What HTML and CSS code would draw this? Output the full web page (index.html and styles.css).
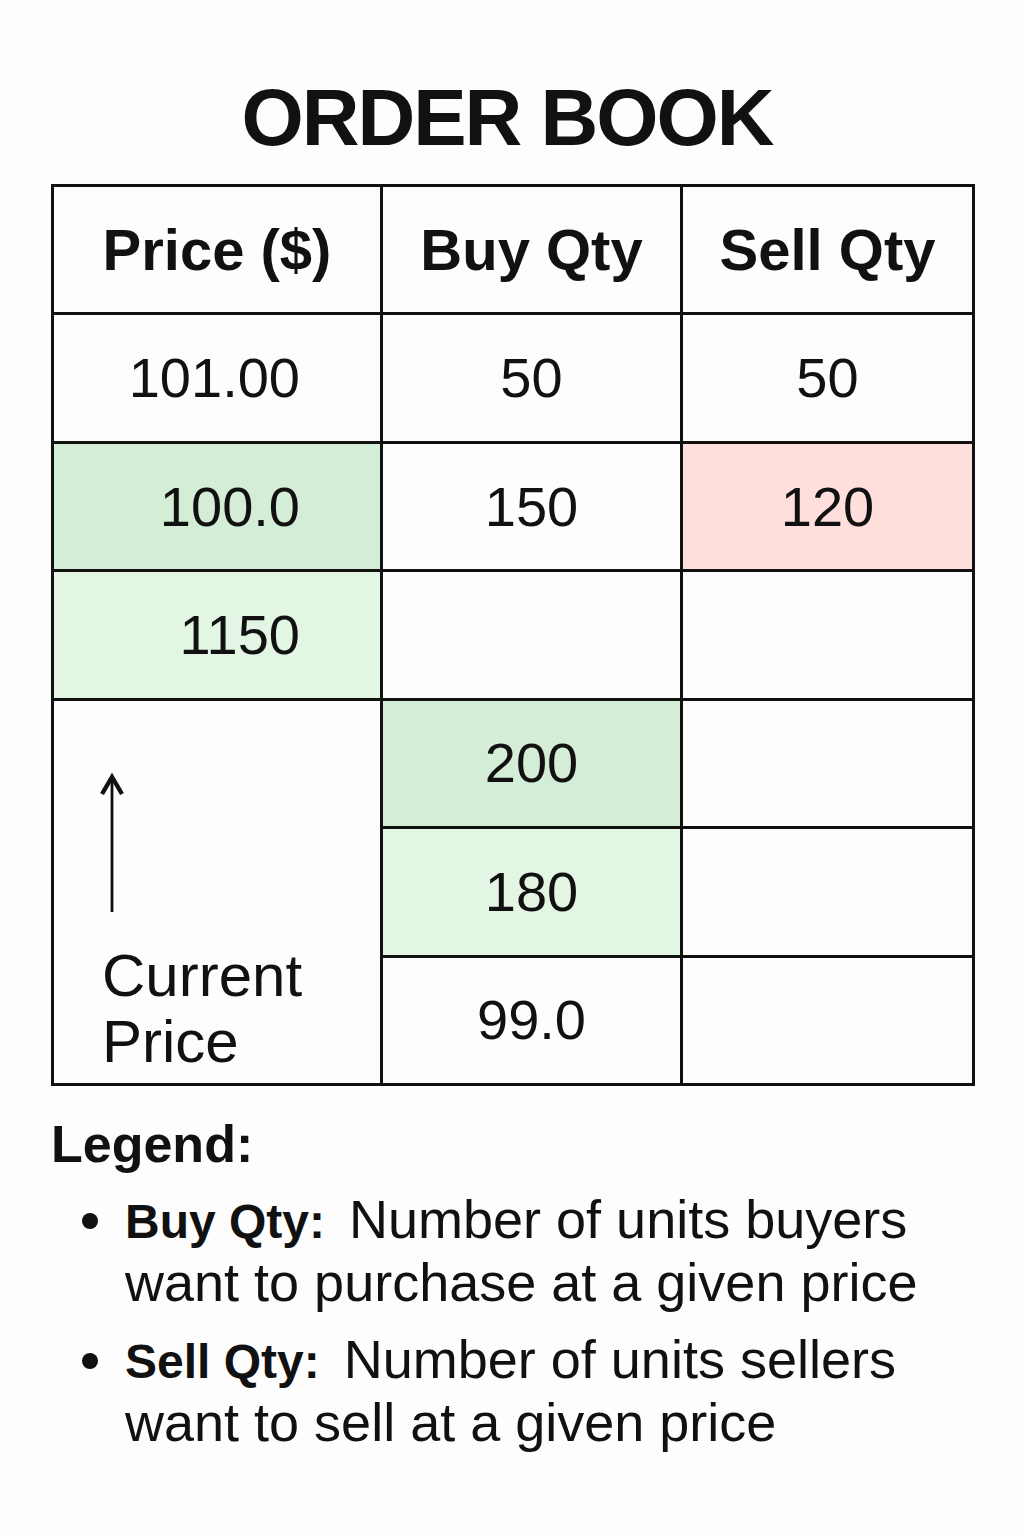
FILE: index.html
```html
<!DOCTYPE html>
<html lang="en">
<head>
<meta charset="utf-8">
<title>Order Book</title>
<link rel="stylesheet" href="styles.css">
</head>
<body>
<main class="page">
  <h1 class="title">ORDER BOOK</h1>
  <div class="book">
    <div class="cell head">Price ($)</div>
    <div class="cell head">Buy Qty</div>
    <div class="cell head">Sell Qty</div>

    <div class="cell price">101.00</div>
    <div class="cell">50</div>
    <div class="cell">50</div>

    <div class="cell price green-dark">100.0</div>
    <div class="cell">150</div>
    <div class="cell red">120</div>

    <div class="cell price green-light">1150</div>
    <div class="cell"></div>
    <div class="cell"></div>

    <div class="cell current">
      <svg class="arrow" width="26" height="140" viewBox="0 0 26 140" aria-hidden="true">
        <line x1="13" y1="8" x2="13" y2="139" stroke="#111" stroke-width="2.8"/>
        <polyline points="3,21 13,4 23,21" fill="none" stroke="#111" stroke-width="4.4" stroke-linejoin="miter" stroke-miterlimit="10"/>
      </svg>
      <div class="current-label">Current<br>Price</div>
    </div>
    <div class="cell green-dark">200</div>
    <div class="cell"></div>

    <div class="cell green-light">180</div>
    <div class="cell"></div>

    <div class="cell">99.0</div>
    <div class="cell"></div>
  </div>

  <section class="legend">
    <h2 class="legend-title">Legend:</h2>
    <ul class="legend-list">
      <li class="legend-item">
        <span class="dot"></span>
        <div class="legend-text">
          <div class="line"><span class="label">Buy Qty:</span><span class="desc">Number of units buyers</span></div>
          <div class="line">want to purchase at a given price</div>
        </div>
      </li>
      <li class="legend-item">
        <span class="dot"></span>
        <div class="legend-text">
          <div class="line"><span class="label">Sell Qty:</span><span class="desc">Number of units sellers</span></div>
          <div class="line">want to sell at a given price</div>
        </div>
      </li>
    </ul>
  </section>
</main>
</body>
</html>
```
FILE: styles.css
```css
html, body {
  margin: 0;
  padding: 0;
  background: #fdfdfd;
}

body {
  font-family: "Liberation Sans", Arial, sans-serif;
  color: #111;
  width: 1024px;
  min-height: 1536px;
}

.page {
  width: 924px;
  margin-left: 51px;
  padding-top: 78px;
}

.title {
  margin: 0 0 26px 0;
  padding-right: 12px;
  font-size: 80px;
  line-height: 80px;
  font-weight: 700;
  letter-spacing: -2px;
  text-align: center;
}

.book {
  display: grid;
  grid-template-columns: 326px 297px 289px;
  grid-template-rows: repeat(7, 1fr);
  gap: 3px;
  height: 902px;
  box-sizing: border-box;
  border: 3px solid #111;
  background: #111;
}

.cell {
  background: #fdfdfd;
  display: flex;
  align-items: center;
  justify-content: center;
  font-size: 56px;
  line-height: 1;
}

.head {
  font-weight: 700;
  font-size: 58px;
}

.price {
  justify-content: flex-end;
  padding-right: 80px;
}

.green-dark { background: #d4edd6; }
.green-light { background: #e3f6e3; }
.red { background: #ffdfdb; }

.current {
  grid-row: span 3;
  flex-direction: column;
  align-items: flex-start;
  justify-content: flex-start;
  padding-left: 48px;
}

.arrow {
  display: block;
  margin-top: 72px;
  margin-left: -3px;
}

.current-label {
  margin-top: 30px;
  font-size: 60px;
  line-height: 66px;
}

.legend {
  margin-top: 28px;
}

.legend-title {
  margin: 0;
  font-size: 52px;
  line-height: 60px;
  font-weight: 700;
}

.legend-list {
  list-style: none;
  margin: 15px 0 0 0;
  padding: 0;
  display: flex;
  flex-direction: column;
  gap: 17px;
}

.legend-item {
  display: flex;
  align-items: flex-start;
}

.dot {
  flex: none;
  width: 16px;
  height: 16px;
  border-radius: 50%;
  background: #111;
  margin: 24px 27px 0 31px;
}

.legend-text {
  font-size: 54px;
  line-height: 60px;
}

.line {
  white-space: nowrap;
}

.label {
  font-weight: 700;
  font-size: 48px;
  margin-right: 24px;
}
```
